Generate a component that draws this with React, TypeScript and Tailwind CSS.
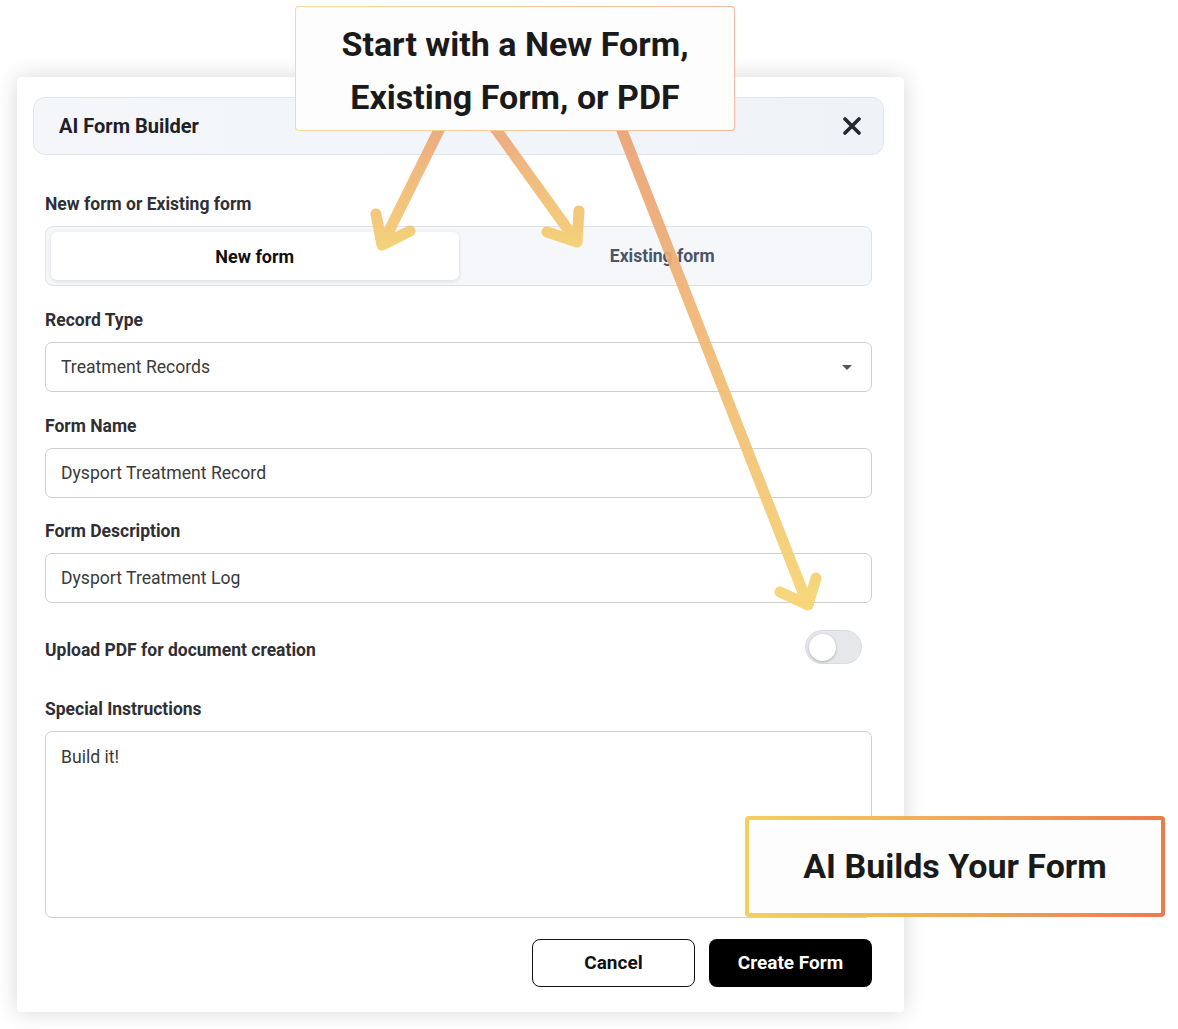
import React from 'react';

const FONT = { fontFamily: 'Roboto, "Liberation Sans", sans-serif' };

const Label: React.FC<{ children: React.ReactNode }> = ({ children }) => (
  <div className="text-[17.5px] leading-[20px] font-bold text-[#2f2f35]">{children}</div>
);

const TextBox: React.FC<{ value: string; caret?: boolean }> = ({ value, caret }) => (
  <div className="mt-[12px] h-[50px] rounded-[7px] border border-[#cfcfcf] bg-white px-[15px] flex items-center justify-between">
    <span className="text-[17.6px] text-[#3a3a3a]">{value}</span>
    {caret && (
      <svg width="10" height="5" viewBox="0 0 10 5" className="mr-[4px]">
        <path d="M0 0h10L5 5z" fill="#555" />
      </svg>
    )}
  </div>
);

// the three hand-drawn annotation arrows, drawn over the dialog
const Arrows: React.FC = () => (
  <svg className="absolute inset-0 pointer-events-none" width="1178" height="1029" viewBox="0 0 1178 1029">
    <defs>
      <linearGradient id="ag1" x1="0" y1="130" x2="0" y2="250" gradientUnits="userSpaceOnUse">
        <stop offset="0" stopColor="#eca678" />
        <stop offset="1" stopColor="#f5d06e" />
      </linearGradient>
      <linearGradient id="ag3" x1="0" y1="130" x2="0" y2="610" gradientUnits="userSpaceOnUse">
        <stop offset="0" stopColor="#eba175" />
        <stop offset="1" stopColor="#f6d470" />
      </linearGradient>
    </defs>
    <g fill="none" strokeWidth="11" strokeLinecap="round" strokeLinejoin="round" opacity="0.92">
      <path d="M440 128 L382 245 M376 214 L382 245 L410 231" stroke="url(#ag1)" />
      <path d="M495 128 L577 242 M579 211 L577 242 L547 232" stroke="url(#ag1)" />
      <path d="M621 128 L808 605 M816 578 L808 605 L780 592" stroke="url(#ag3)" />
    </g>
  </svg>
);

export default function App() {
  return (
    <div className="relative w-[1178px] h-[1029px] bg-white overflow-hidden" style={FONT}>
      <div className="absolute left-0 top-0 w-full pt-[77px] pl-[17px]">
        {/* Dialog */}
        <div className="w-[887px] h-[935px] bg-white rounded-[4px] shadow-[0_0_22px_rgba(0,0,0,0.16)] pt-[20px]">
          <div className="ml-[16px] mr-[20px] h-[58px] rounded-[12px] border border-[#dfe5ee] bg-gradient-to-r from-[#f4f6fa] to-[#eff3f8] flex items-center justify-between pl-[25px] pr-[22px]">
            <span className="text-[20px] font-bold text-[#1f2128]">AI Form Builder</span>
            <svg width="18" height="18" viewBox="0 0 18 18">
              <path d="M2 2L16 16M16 2L2 16" stroke="#26282e" strokeWidth="3.6" strokeLinecap="round" />
            </svg>
          </div>

          <div className="pl-[28px] pr-[32px]">
            <div className="mt-[39px]">
              <Label>New form or Existing form</Label>
              <div className="mt-[12px] h-[60px] rounded-[8px] border border-[#dde3ec] bg-[#f5f7fb] p-[5px] grid grid-cols-2">
                <div className="rounded-[6px] bg-white shadow-[0_1px_4px_rgba(0,0,0,0.12)] flex items-center justify-center text-[18px] font-bold text-[#111]">
                  New form
                </div>
                <div className="flex items-center justify-center text-[17.5px] font-bold text-[#4b5567]">Existing form</div>
              </div>
            </div>

            <div className="mt-[24px]">
              <Label>Record Type</Label>
              <TextBox value="Treatment Records" caret />
            </div>

            <div className="mt-[24px]">
              <Label>Form Name</Label>
              <TextBox value="Dysport Treatment Record" />
            </div>

            <div className="mt-[23px]">
              <Label>Form Description</Label>
              <TextBox value="Dysport Treatment Log" />
            </div>

            <div className="mt-[27px] h-[34px] flex items-center justify-between">
              <div className="pt-[5px]">
                <Label>Upload PDF for document creation</Label>
              </div>
              <div className="mr-[10px] w-[57px] h-[34px] rounded-full bg-[#e6e7eb] border border-[#dcdde2] p-[3px]">
                <div className="w-[27px] h-[27px] rounded-full bg-white shadow-[0_1px_3px_rgba(0,0,0,0.25)]" />
              </div>
            </div>

            <div className="mt-[35px]">
              <Label>Special Instructions</Label>
              <div className="mt-[12px] h-[187px] rounded-[7px] border border-[#cfcfcf] bg-white px-[15px] pt-[12px] text-[17.6px] text-[#3a3a3a]">
                Build it!
              </div>
            </div>

            <div className="mt-[21px] flex justify-end gap-[14px]">
              <button className="w-[163px] h-[48px] rounded-[8px] border border-[#111] bg-white text-[19px] font-bold text-[#111]">
                Cancel
              </button>
              <button className="w-[163px] h-[48px] rounded-[8px] bg-black text-[19px] font-bold text-white">
                Create Form
              </button>
            </div>
          </div>
        </div>
      </div>

      <Arrows />

      {/* Callout: start with */}
      <div className="absolute left-[295px] top-[6px] w-[440px] h-[125px] rounded-[4px] p-[1px] bg-gradient-to-r from-[#f7dc8e] to-[#f3b9a2]">
        <div className="w-full h-full rounded-[3px] bg-[#fdfdfd] flex flex-col items-center justify-center pt-[4px]">
          <div className="text-[34px] leading-[53px] font-bold text-[#1a1a1a] text-center">
            Start with a New Form,
            <br />
            Existing Form, or PDF
          </div>
        </div>
      </div>

      {/* Callout: AI builds */}
      <div className="absolute left-[745px] top-[816px] w-[420px] h-[101px] rounded-[4px] p-[4px] bg-gradient-to-r from-[#f5cf5e] via-[#f1a957] to-[#ec7a4c]">
        <div className="w-full h-full bg-[#fdfdfd] flex items-center justify-center">
          <span className="text-[34px] font-bold text-[#1a1a1a]">AI Builds Your Form</span>
        </div>
      </div>
    </div>
  );
}
